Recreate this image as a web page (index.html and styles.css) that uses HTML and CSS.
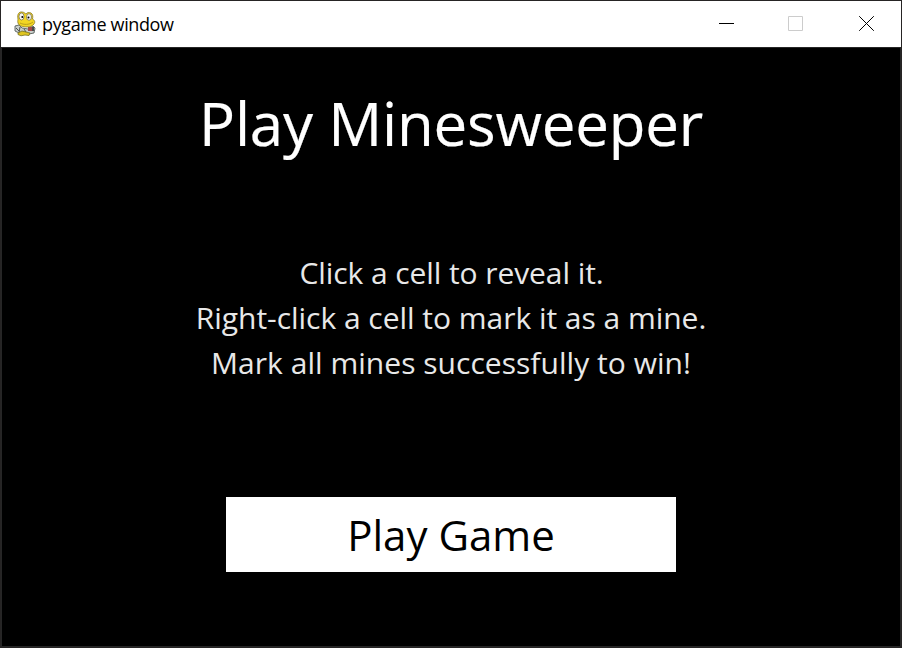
FILE: index.html
```html
<!DOCTYPE html>
<html lang="en">
<head>
<meta charset="utf-8">
<title>pygame window</title>
<link rel="stylesheet" href="styles.css">
</head>
<body>
<div class="window">
  <header class="titlebar">
    <svg class="logo" viewBox="0 0 24 26" width="24" height="26">
      <path fill="#c9cecb" stroke="#555f5c" stroke-width=".9" d="M2 15l4-1 3 3 6 1 5-3 2 2-1 5-5 1-6-2-4 1-4-2z"/>
      <path d="M3 17l3 3m1-4l-1 6m5-4l2 3" stroke="#4e5552" stroke-width="1" fill="none"/>
      <path fill="#a3494a" d="M15 16h4v4h-4z"/>
      <path fill="#4b4b4b" d="M19 16h2v4h-2z"/>
      <path fill="#dfc51f" stroke="#77701f" stroke-width=".8" d="M5 22l4-2 4 1 4 1-1 2.500-4-.5-4 .8-3-1.300z"/>
      <path fill="#f3d624" stroke="#887823" stroke-width=".8" d="M5 8C4 3 6 .6 9 1c2 0 3 1.500 4 2 1-1.500 3-2 5-1 2 1 2 4 1.500 6 2 1 3 3 1.500 5s-4 3-7 3c-4 0-8-1-9-4-.5-2 0-3 0-4z"/>
      <ellipse cx="8.500" cy="5.500" rx="2.500" ry="3.500" fill="#f4f4ef" stroke="#6f6850" stroke-width=".7"/>
      <ellipse cx="16" cy="6" rx="2.500" ry="3.300" fill="#f4f4ef" stroke="#6f6850" stroke-width=".7"/>
      <circle cx="9.300" cy="6" r="1"/><circle cx="15.500" cy="6.500" r="1"/>
      <path d="M7 12c4 2 9 2 13-1" fill="none" stroke="#a99119" stroke-width=".8"/>
    </svg>
    <span class="caption">pygame window</span>
    <div class="controls">
      <svg width="16" height="16" viewBox="0 0 16 16"><path d="M0 7.5h15" stroke="#000"/></svg>
      <svg class="maximize" width="16" height="16" viewBox="0 0 16 16"><path d="M.5.5h14v14H.5z" fill="none" stroke="#ccc"/></svg>
      <svg width="16" height="16" viewBox="0 0 16 16"><path d="M.2.2l14.600 14.600m0-14.600l-14.600 14.600" stroke="#000"/></svg>
    </div>
  </header>
  <main class="game">
    <h1 class="title">Play Minesweeper</h1>
    <div class="rules"><p class="first">Click a cell to reveal it.</p><p>Right-click a cell to mark it as a mine.</p><p class="last">Mark all mines successfully to win!</p></div>
    <button class="play">Play Game</button>
  </main>
</div>
</body>
</html>
```
FILE: styles.css
```css
* { box-sizing: border-box; }
body { margin: 0; }
.window { width: 902px; height: 648px; border: 1px solid #262424; background: #000; overflow: hidden; display: flex; flex-direction: column; }
.titlebar { height: 46px; flex: none; background: #fff; display: flex; align-items: center; padding-left: 12px; }
.logo { margin-top: -1px; }
.caption { font: 18px/24px "Open Sans", sans-serif; letter-spacing: -0.38px; margin-left: 5px; }
.controls { margin-left: auto; display: flex; gap: 54px; padding-right: 26px; }
.maximize { margin: 0 1px 0 -1px; }
.game { flex: 1; display: flex; flex-direction: column; align-items: center; font-family: "Open Sans", sans-serif; color: #fff; border: 1px solid #262626; }
.title { margin: 34px 0 0; font-size: 60px; line-height: 82px; font-weight: 400; letter-spacing: -0.2px; white-space: nowrap; -webkit-text-stroke: 0.2px #fff; }
.rules { margin-top: 86px; text-align: center; font-size: 30px; line-height: 45px; letter-spacing: -0.03px; color: #e8e8e8; }
.rules p { margin: 0; }
.rules .first { letter-spacing: -0.08px; padding-left: 1px; }
.rules .last { letter-spacing: 0.03px; }
.play { margin-top: 112px; width: 450px; height: 75px; border: 0; padding: 0; background: #fff; color: #000; font: 42px/75px "Open Sans", sans-serif; }
```
